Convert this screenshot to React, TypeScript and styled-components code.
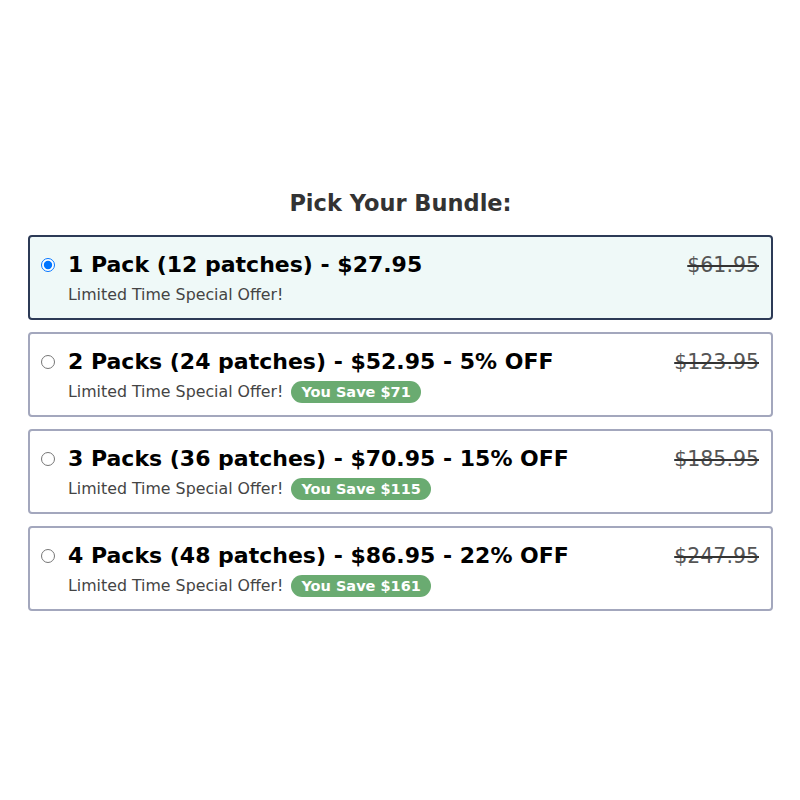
import React, { useState } from "react";
import styled, { createGlobalStyle } from "styled-components";

const GlobalStyle = createGlobalStyle`
  html, body { margin: 0; padding: 0; background: #ffffff; }
  body { font-family: "DejaVu Sans", "Open Sans", sans-serif; }
`;

const Page = styled.div`
  width: 800px;
  height: 800px;
  box-sizing: border-box;
  padding: 187px 27px 0 28px;
`;

const Heading = styled.h2`
  margin: 0 0 16px;
  text-align: center;
  font-size: 22.5px;
  font-weight: 700;
  color: #333333;
  line-height: 32px;
`;

const List = styled.div`
  display: flex;
  flex-direction: column;
  gap: 12px;
`;

const Card = styled.label<{ $selected: boolean }>`
  display: flex;
  align-items: flex-start;
  box-sizing: border-box;
  height: 85px;
  padding: 14px 12px 0 12px;
  border: 2px solid ${(p) => (p.$selected ? "#2c3a56" : "#a3a7bd")};
  border-radius: 4px;
  background: ${(p) => (p.$selected ? "#eff9f8" : "#ffffff")};
  cursor: pointer;
`;

const Radio = styled.input`
  width: 14px;
  height: 14px;
  margin: 7px 13px 0 -1px;
  flex: none;
`;

const Body = styled.div`
  flex: 1;
  display: flex;
  flex-direction: column;
`;

const TopRow = styled.div`
  display: flex;
  justify-content: space-between;
  align-items: baseline;
`;

const Title = styled.span`
  font-size: 22px;
  font-weight: 700;
  color: #000000;
  line-height: 28px;
`;

const OldPrice = styled.span`
  font-size: 20.5px;
  font-weight: 400;
  color: #555555;
  text-decoration: line-through;
  text-decoration-color: #333333;
  line-height: 28px;
`;

const SubRow = styled.div`
  display: flex;
  align-items: center;
  gap: 8px;
  margin-top: 5px;
`;

const Sub = styled.span`
  font-size: 15.8px;
  color: #444444;
  line-height: 22px;
`;

const Badge = styled.span`
  display: inline-flex;
  align-items: center;
  height: 22px;
  padding: 0 10px;
  border-radius: 11px;
  background: #6aab71;
  color: #ffffff;
  font-size: 14.5px;
  font-weight: 700;
`;

const bundles = [
  { title: "1 Pack (12 patches) - $27.95", old: "$61.95", save: null },
  { title: "2 Packs (24 patches) - $52.95 - 5% OFF", old: "$123.95", save: "You Save $71" },
  { title: "3 Packs (36 patches) - $70.95 - 15% OFF", old: "$185.95", save: "You Save $115" },
  { title: "4 Packs (48 patches) - $86.95 - 22% OFF", old: "$247.95", save: "You Save $161" },
];

export default function App() {
  const [sel, setSel] = useState(0);
  return (
    <>
      <GlobalStyle />
      <Page>
        <Heading>Pick Your Bundle:</Heading>
        <List>
          {bundles.map((b, i) => (
            <Card key={i} $selected={sel === i}>
              <Radio type="radio" name="bundle" checked={sel === i} onChange={() => setSel(i)} />
              <Body>
                <TopRow>
                  <Title>{b.title}</Title>
                  <OldPrice>{b.old}</OldPrice>
                </TopRow>
                <SubRow>
                  <Sub>Limited Time Special Offer!</Sub>
                  {b.save && <Badge>{b.save}</Badge>}
                </SubRow>
              </Body>
            </Card>
          ))}
        </List>
      </Page>
    </>
  );
}
